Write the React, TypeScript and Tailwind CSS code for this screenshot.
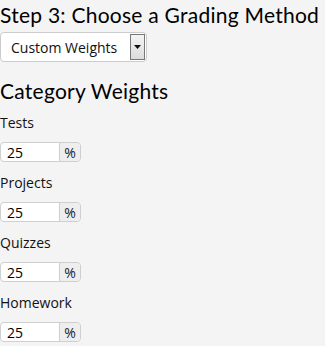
const CATEGORIES = ["Tests", "Projects", "Quizzes", "Homework"];

function WeightInput({ label }: { label: string }) {
  return (
    <div className="mt-[12px] first:mt-0">
      <div className="text-[14px] leading-[18px] text-[#111]">{label}</div>
      <div className="mt-[10px] flex h-[20px] w-[81px] rounded-[4px] border border-[#cfcfcf] bg-white">
        <div className="flex w-[58px] items-center pl-[6px] text-[14px] text-black">25</div>
        <div className="flex flex-1 items-center justify-center rounded-r-[4px] border-l border-[#cfcfcf] bg-[#eeeeee] text-[14px] text-[#222]">
          %
        </div>
      </div>
    </div>
  );
}

export default function App() {
  return (
    <div
      className="h-[346px] w-[325px] overflow-hidden bg-[#f4f4f4] text-black"
      style={{ fontFamily: '"Open Sans", sans-serif' }}
    >
      <h1
        className="whitespace-nowrap pt-[1px] text-[21px] leading-[28px] tracking-[0.25px] text-black"
        style={{ fontFamily: 'Lato, "Open Sans", sans-serif' }}
      >
        Step 3: Choose a Grading Method
      </h1>

      {/* Select */}
      <div className="mt-[3px] flex h-[30px] w-[147px] items-center rounded-[4px] border border-[#cccccc] bg-white">
        <div className="flex-1 pl-[10px] text-[14px] text-[#111]">Custom Weights</div>
        <div className="mr-[1px] flex h-[26px] w-[15px] items-center justify-center border border-[#777] bg-gradient-to-b from-[#f4f4f4] to-[#dcdcdc]">
          <svg width="7" height="4" viewBox="0 0 7 4">
            <path d="M0 0h7L3.5 4z" fill="#111" />
          </svg>
        </div>
      </div>

      <h2
        className="mt-[15px] whitespace-nowrap text-[21px] leading-[28px] tracking-[0.25px] text-black"
        style={{ fontFamily: 'Lato, "Open Sans", sans-serif' }}
      >
        Category Weights
      </h2>

      <div className="mt-[9px] flex flex-col">
        {CATEGORIES.map((c) => (
          <WeightInput key={c} label={c} />
        ))}
      </div>
    </div>
  );
}
